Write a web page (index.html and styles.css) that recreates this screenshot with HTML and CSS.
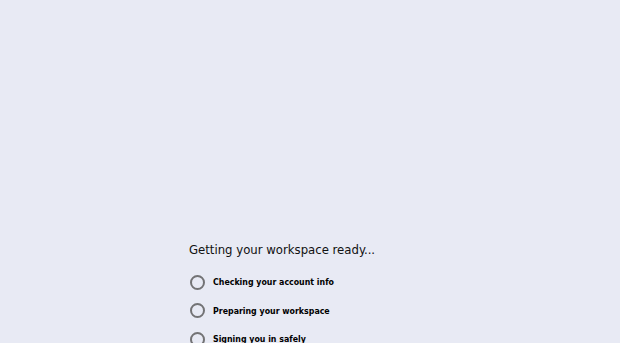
FILE: index.html
```html
<!DOCTYPE html>
<html>
<head>
<meta charset="utf-8">
<link rel="stylesheet" href="styles.css">
</head>
<body>
<main class="page">
  <section class="loader">
    <h1 class="title">Getting your workspace ready...</h1>
    <ul class="steps">
      <li class="step"><span class="ring"></span><span class="label">Checking your account info</span></li>
      <li class="step"><span class="ring"></span><span class="label">Preparing your workspace</span></li>
      <li class="step"><span class="ring"></span><span class="label">Signing you in safely</span></li>
    </ul>
  </section>
</main>
</body>
</html>
```
FILE: styles.css
```css
html, body {
  margin: 0;
  padding: 0;
  background: #e8eaf4;
  height: 100%;
  overflow: hidden;
}
body {
  font-family: "DejaVu Sans Condensed", "DejaVu Sans", sans-serif;
  font-stretch: condensed;
  color: #111;
}
.page {
  display: flex;
  justify-content: center;
  padding-top: 240px;
}
.loader {
  width: 242px;
}
.title {
  margin: 0 0 14px 0;
  font-size: 13px;
  font-weight: normal;
  line-height: 20px;
  color: #111;
}
.steps {
  list-style: none;
  margin: 0;
  padding: 0 0 0 1px;
  display: flex;
  flex-direction: column;
  gap: 12.5px;
}
.step {
  display: flex;
  align-items: center;
  gap: 8px;
  height: 16px;
}
.ring {
  box-sizing: border-box;
  width: 15px;
  height: 15px;
  border: 2px solid #737375;
  border-radius: 50%;
  flex: none;
}
.label {
  font-size: 8.75px;
  font-weight: bold;
  color: #000;
}
```
